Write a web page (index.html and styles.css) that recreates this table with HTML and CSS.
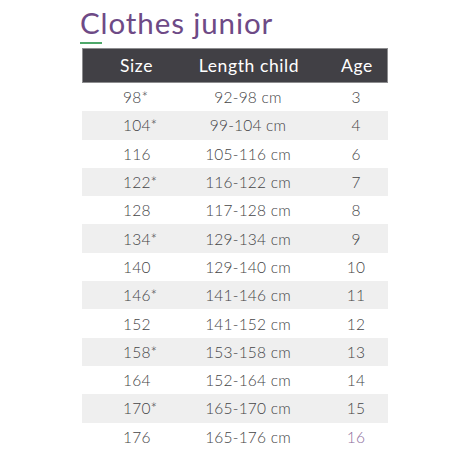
FILE: index.html
```html
<!DOCTYPE html>
<html>
<head>
<meta charset="utf-8">
<link rel="stylesheet" href="styles.css">
</head>
<body>
<div class="sheet">
  <h1 class="title">Clothes junior</h1>
  <div class="rule"></div>
  <div class="table">
    <div class="head">
      <span class="c1">Size</span>
      <span class="c2">Length child</span>
      <span class="c3">Age</span>
    </div>
    <div class="row"><span class="c1">98*</span><span class="c2">92-98 cm</span><span class="c3">3</span></div>
    <div class="row alt"><span class="c1">104*</span><span class="c2">99-104 cm</span><span class="c3">4</span></div>
    <div class="row"><span class="c1">116</span><span class="c2">105-116 cm</span><span class="c3">6</span></div>
    <div class="row alt"><span class="c1">122*</span><span class="c2">116-122 cm</span><span class="c3">7</span></div>
    <div class="row"><span class="c1">128</span><span class="c2">117-128 cm</span><span class="c3">8</span></div>
    <div class="row alt"><span class="c1">134*</span><span class="c2">129-134 cm</span><span class="c3">9</span></div>
    <div class="row"><span class="c1">140</span><span class="c2">129-140 cm</span><span class="c3">10</span></div>
    <div class="row alt"><span class="c1">146*</span><span class="c2">141-146 cm</span><span class="c3">11</span></div>
    <div class="row"><span class="c1">152</span><span class="c2">141-152 cm</span><span class="c3">12</span></div>
    <div class="row alt"><span class="c1">158*</span><span class="c2">153-158 cm</span><span class="c3">13</span></div>
    <div class="row"><span class="c1">164</span><span class="c2">152-164 cm</span><span class="c3">14</span></div>
    <div class="row alt"><span class="c1">170*</span><span class="c2">165-170 cm</span><span class="c3">15</span></div>
    <div class="row"><span class="c1">176</span><span class="c2">165-176 cm</span><span class="c3 last">16</span></div>
  </div>
</div>
</body>
</html>
```
FILE: styles.css
```css
html, body {
  margin: 0;
  padding: 0;
  background: #ffffff;
}
body {
  font-family: Lato, "Open Sans", sans-serif;
  width: 458px;
  height: 458px;
  overflow: hidden;
}
.sheet {
  padding: 6px 0 0 80px;
  width: 308px;
}
.title {
  margin: 0;
  font-size: 29.5px;
  font-weight: 400;
  color: #6e4a86;
  line-height: 34px;
  letter-spacing: 0.9px;
}
.rule {
  width: 22px;
  height: 2px;
  background: #4ea86a;
  margin-top: 2px;
  margin-bottom: 4px;
}
.table {
  margin-left: 2px;
  width: 306px;
}
.head {
  display: grid;
  grid-template-columns: 108px 116px 82px;
  align-items: center;
  height: 33px;
  background: #414045;
  border: 1px solid #8d8d8f;
  color: #ffffff;
  font-size: 17.5px;
  letter-spacing: 0.6px;
  box-sizing: content-box;
  width: 304px;
}
.head .c1 { padding-left: 37px; }
.head .c2 { text-align: center; }
.head .c3 { text-align: center; padding-left: 18px; }
.row {
  display: grid;
  grid-template-columns: 108px 116px 82px;
  align-items: center;
  height: 28.3px;
  color: #444446;
  font-size: 15.5px;
  font-weight: 300;
  letter-spacing: 0.2px;
}
.row.alt { background: #efefef; }
.row .c1 { padding-left: 41px; }
.row .c2 { text-align: center; }
.row .c3 { text-align: center; padding-left: 18px; }
.row .last { color: #8b6d9c; }
```
